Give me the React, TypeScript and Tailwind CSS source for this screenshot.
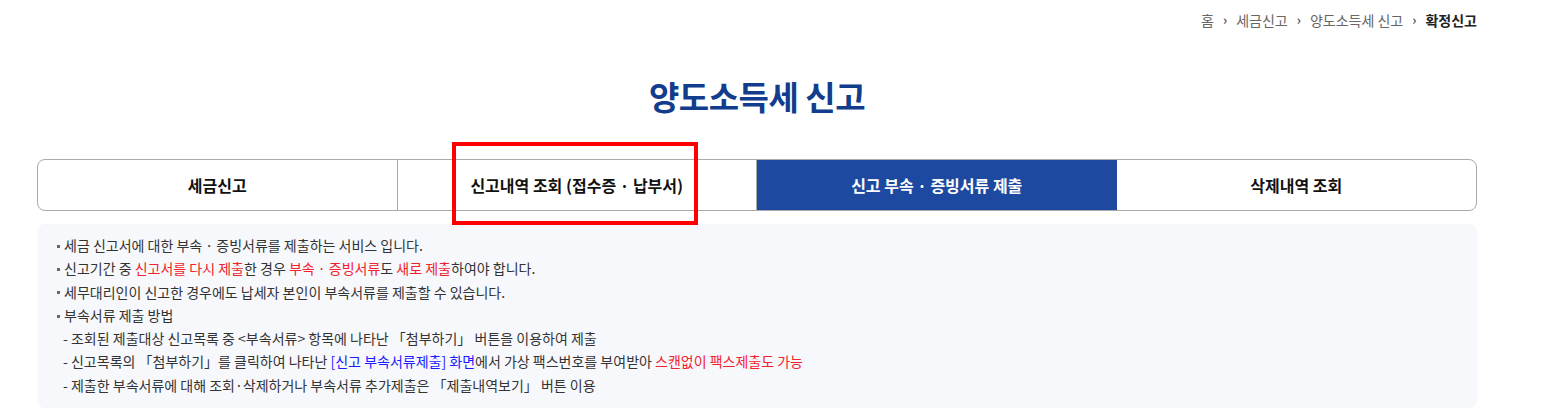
const tabs = ['세금신고', '신고내역 조회 (접수증 · 납부서)', '신고 부속 · 증빙서류 제출', '삭제내역 조회'];

function Red({ children }: { children: React.ReactNode }) {
  return <span className="text-[#f2212b]">{children}</span>;
}

function Dot() {
  return <span className="inline-block w-[3px] h-[3px] bg-[#666] align-middle mr-[4px] mb-[2px]" />;
}

export default function App() {
  return (
    <div
      className="w-[1551px] h-[412px] bg-white text-[#333]"
      style={{ fontFamily: '"Noto Sans CJK KR", "Noto Sans", sans-serif' }}
    >
      <div className="w-[1440px] ml-[37px] relative">
        {/* breadcrumb */}
        <div className="flex justify-end items-center gap-[9px] pt-[10px] text-[14px] text-[#666] leading-[20px]">
          <span>홈</span>
          <span className="text-[#555] font-bold text-[13px]">›</span>
          <span>세금신고</span>
          <span className="text-[#555] font-bold text-[13px]">›</span>
          <span>양도소득세 신고</span>
          <span className="text-[#555] font-bold text-[13px]">›</span>
          <span className="font-bold text-[#222]">확정신고</span>
        </div>

        <h1 className="text-center text-[33px] font-bold text-[#123d8c] tracking-[-0.5px] mt-[46px] leading-[40px]">
          양도소득세 신고
        </h1>

        {/* tabs */}
        <div className="mt-[43px] grid grid-cols-4 h-[52px] border border-[#aaa] rounded-[8px] overflow-hidden">
          {tabs.map((t, i) => (
            <div
              key={t}
              className={
                i === 2
                  ? 'flex items-center justify-center bg-[#1d4aa0] text-white text-[16px] font-bold'
                  : i < 2
                  ? 'flex items-center justify-center border-r border-[#aaa] text-[#111] text-[16px] font-bold'
                  : 'flex items-center justify-center text-[#111] text-[16px] font-bold'
              }
            >
              {t}
            </div>
          ))}
        </div>

        {/* annotation box */}
        <div className="absolute left-[415px] top-[142px] w-[246px] h-[83px] border-[4px] border-[#ff0000]" />

        {/* info box */}
        <div className="mt-[13px] bg-[#f7f8fc] rounded-[8px] px-[20px] pt-[10px] pb-[11px] text-[14px] leading-[23.3px] text-[#333]">
          <p><Dot />세금 신고서에 대한 부속 · 증빙서류를 제출하는 서비스 입니다.</p>
          <p>
            <Dot />신고기간 중 <Red>신고서를 다시 제출</Red>한 경우 <Red>부속 · 증빙서류</Red>도 <Red>새로 제출</Red>하여야 합니다.
          </p>
          <p><Dot />세무대리인이 신고한 경우에도 납세자 본인이 부속서류를 제출할 수 있습니다.</p>
          <p><Dot />부속서류 제출 방법</p>
          <p className="pl-[6px]">- 조회된 제출대상 신고목록 중 &lt;부속서류&gt; 항목에 나타난 「첨부하기」 버튼을 이용하여 제출</p>
          <p className="pl-[6px]">
            - 신고목록의 「첨부하기」를 클릭하여 나타난 <span className="text-[#1a1aff]">[신고 부속서류제출] 화면</span>에서 가상 팩스번호를 부여받아{' '}
            <Red>스캔없이 팩스제출도 가능</Red>
          </p>
          <p className="pl-[6px]">- 제출한 부속서류에 대해 조회·삭제하거나 부속서류 추가제출은 「제출내역보기」 버튼 이용</p>
        </div>
      </div>
    </div>
  );
}
